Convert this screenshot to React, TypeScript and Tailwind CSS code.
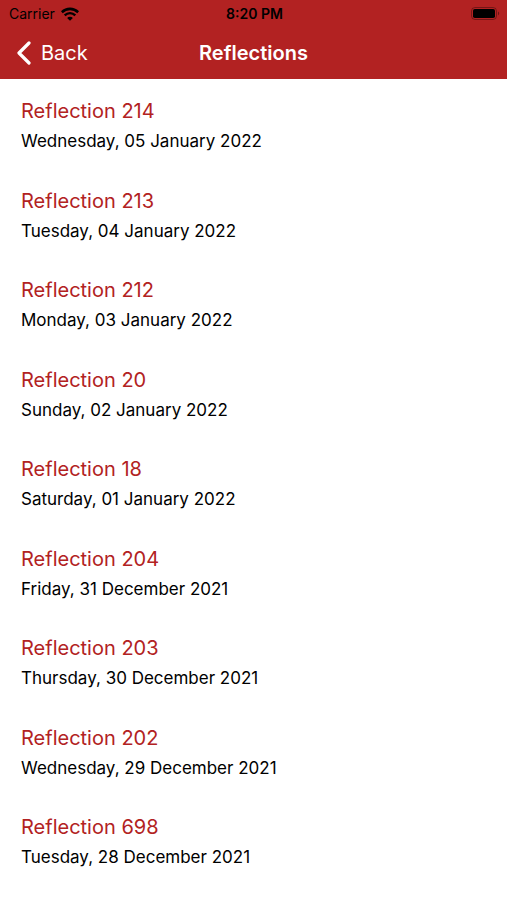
const reflections = [
  { id: 1, title: "Reflection 214", date: "Wednesday, 05 January 2022" },
  { id: 2, title: "Reflection 213", date: "Tuesday, 04 January 2022" },
  { id: 3, title: "Reflection 212", date: "Monday, 03 January 2022" },
  { id: 4, title: "Reflection 20", date: "Sunday, 02 January 2022" },
  { id: 5, title: "Reflection 18", date: "Saturday, 01 January 2022" },
  { id: 6, title: "Reflection 204", date: "Friday, 31 December 2021" },
  { id: 7, title: "Reflection 203", date: "Thursday, 30 December 2021" },
  { id: 8, title: "Reflection 202", date: "Wednesday, 29 December 2021" },
  { id: 9, title: "Reflection 698", date: "Tuesday, 28 December 2021" },
];

function WifiIcon() {
  return (
    <svg width="18" height="14" viewBox="0 0 18 14" fill="none" stroke="currentColor" aria-hidden="true">
      <path d="M0.8 5.2C5.5 0.7 12.5 0.7 17.2 5.2" strokeWidth="2.6" />
      <path d="M3.7 8.3C6.7 5.4 11.3 5.4 14.3 8.3" strokeWidth="2.4" />
      <path d="M9 13.8L6.1 10.9C7.7 9.3 10.3 9.3 11.9 10.9Z" fill="currentColor" stroke="none" />
    </svg>
  );
}

function BatteryIcon() {
  return (
    <svg width="29" height="14" viewBox="0 0 29 14" aria-hidden="true">
      <rect x="0.5" y="0.5" width="25" height="12" rx="3.5" fill="none" stroke="currentColor" strokeOpacity="0.35" />
      <rect x="2" y="2" width="22" height="9" rx="1.8" fill="currentColor" />
      <path d="M27 4.6C28.6 5.2 28.6 7.8 27 8.4Z" fill="currentColor" fillOpacity="0.4" />
    </svg>
  );
}

function StatusBar() {
  return (
    <div className="grid h-7 grid-cols-3 items-center pl-[9px] pr-[7px] text-sm text-black">
      <div className="flex items-center gap-1.5">
        <span>Carrier</span>
        <WifiIcon />
      </div>
      <span className="text-center font-semibold">8:20 PM</span>
      <div className="flex justify-end">
        <BatteryIcon />
      </div>
    </div>
  );
}

export default function App() {
  return (
    <div className="flex min-h-screen flex-col bg-white font-[Inter,'Liberation_Sans',sans-serif]">
      <header className="bg-[#b22222]">
        <StatusBar />
        <nav className="grid h-[51px] grid-cols-3 items-center px-4 pb-0.5 text-xl text-white">
          <button type="button" className="flex items-center gap-2.5">
            <svg width="15" height="24" viewBox="0 0 15 24" fill="none" stroke="currentColor" strokeWidth="3.2" aria-hidden="true">
              <path d="M13 2L3 12L13 22" strokeLinecap="round" strokeLinejoin="round" />
            </svg>
            Back
          </button>
          <h1 className="text-center font-semibold">Reflections</h1>
        </nav>
      </header>

      <main className="flex flex-1 flex-col pb-[15px]">
        <ul className="grid flex-1 auto-rows-fr">
          {reflections.map((r) => (
            <li key={r.id}>
              <a href={`#reflection-${r.id}`} className="flex h-full flex-col px-[21px] pt-4">
                <span className="text-xl leading-8 text-[#b22222]">{r.title}</span>
                <span className="text-[17px] leading-7 text-black">{r.date}</span>
              </a>
            </li>
          ))}
        </ul>
      </main>
    </div>
  );
}
